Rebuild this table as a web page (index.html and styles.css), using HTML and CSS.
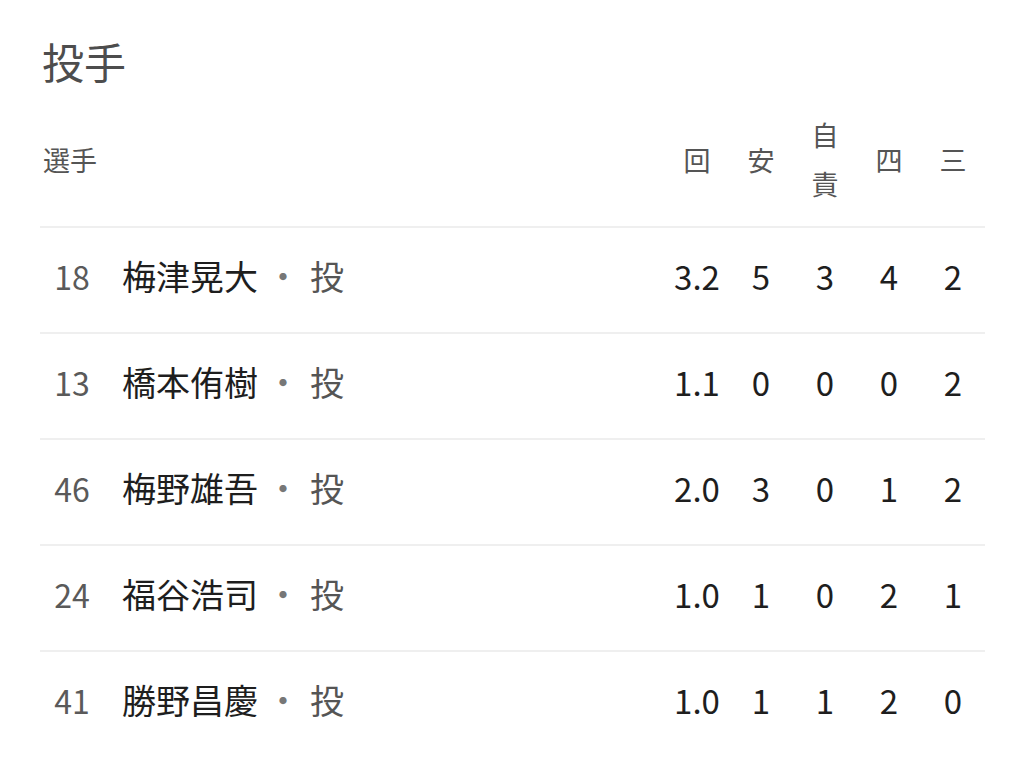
FILE: index.html
```html
<!DOCTYPE html>
<html lang="ja">
<head>
<meta charset="utf-8">
<title>投手</title>
<link rel="stylesheet" href="styles.css">
</head>
<body>
<main class="page">
  <h1 class="title">投手</h1>
  <div class="table">
    <div class="row head">
      <div class="cell player">選手</div>
      <div class="cell stat">回</div>
      <div class="cell stat">安</div>
      <div class="cell stat two">自<br>責</div>
      <div class="cell stat">四</div>
      <div class="cell stat">三</div>
    </div>
    <div class="row">
      <div class="cell num">18</div>
      <div class="cell name">梅津晃大<span class="sep">・</span><span class="pos">投</span></div>
      <div class="cell stat">3.2</div>
      <div class="cell stat">5</div>
      <div class="cell stat">3</div>
      <div class="cell stat">4</div>
      <div class="cell stat">2</div>
    </div>
    <div class="row">
      <div class="cell num">13</div>
      <div class="cell name">橋本侑樹<span class="sep">・</span><span class="pos">投</span></div>
      <div class="cell stat">1.1</div>
      <div class="cell stat">0</div>
      <div class="cell stat">0</div>
      <div class="cell stat">0</div>
      <div class="cell stat">2</div>
    </div>
    <div class="row">
      <div class="cell num">46</div>
      <div class="cell name">梅野雄吾<span class="sep">・</span><span class="pos">投</span></div>
      <div class="cell stat">2.0</div>
      <div class="cell stat">3</div>
      <div class="cell stat">0</div>
      <div class="cell stat">1</div>
      <div class="cell stat">2</div>
    </div>
    <div class="row">
      <div class="cell num">24</div>
      <div class="cell name">福谷浩司<span class="sep">・</span><span class="pos">投</span></div>
      <div class="cell stat">1.0</div>
      <div class="cell stat">1</div>
      <div class="cell stat">0</div>
      <div class="cell stat">2</div>
      <div class="cell stat">1</div>
    </div>
    <div class="row">
      <div class="cell num">41</div>
      <div class="cell name">勝野昌慶<span class="sep">・</span><span class="pos">投</span></div>
      <div class="cell stat">1.0</div>
      <div class="cell stat">1</div>
      <div class="cell stat">1</div>
      <div class="cell stat">2</div>
      <div class="cell stat">0</div>
    </div>
  </div>
</main>
</body>
</html>
```

FILE: styles.css
```css
* { box-sizing: border-box; }
html, body {
  margin: 0;
  padding: 0;
  background: #ffffff;
}
body {
  font-family: "Noto Sans CJK JP", "Noto Sans", sans-serif;
  color: #222222;
}
.page {
  padding: 40px 39px 0 40px;
}
.title {
  margin: 0 0 28px 2px;
  font-size: 42px;
  line-height: 42px;
  font-weight: 400;
  color: #4d4d4d;
}
.table {
  display: flex;
  flex-direction: column;
}
.row {
  display: grid;
  grid-template-columns: 64px 1fr repeat(5, 64px);
  align-items: center;
  border-top: 2px solid #efefef;
  padding: 31px 0 39px;
  font-size: 34px;
  line-height: 34px;
}
.row.head {
  border-top: none;
  padding: 0 0 18px;
  font-size: 27px;
  line-height: 49px;
  color: #555555;
}
.player {
  grid-column: 1 / span 2;
  padding-left: 3px;
}
.stat {
  text-align: center;
}
.row:not(.head) .stat {
  font-size: 33px;
  color: #1e1e1e;
}
.num {
  text-align: center;
  color: #5a5a5a;
  font-size: 32px;
}
.name {
  padding-left: 18px;
  white-space: nowrap;
  color: #1e1e1e;
}
.sep {
  margin: 0 10px 0 8px;
  color: #777777;
}
.pos {
  color: #555555;
}
```
